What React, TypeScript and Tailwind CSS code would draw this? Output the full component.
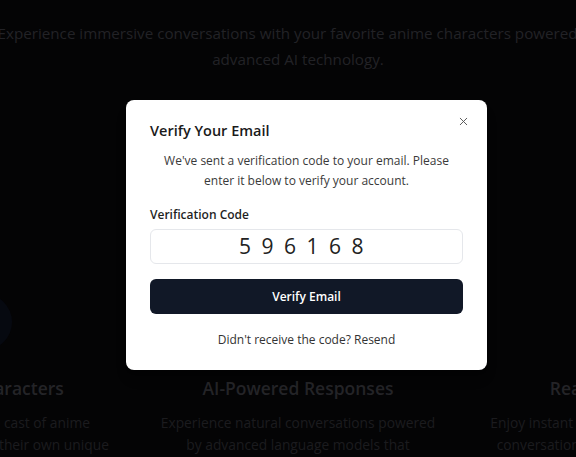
import { X } from "lucide-react";

const features = [
  {
    title: "Diverse Characters",
    text: "Chat with a diverse cast of anime characters, each with their own unique personality.",
  },
  {
    title: "AI-Powered Responses",
    text: "Experience natural conversations powered by advanced language models that understand context.",
  },
  {
    title: "Real-time Chat",
    text: "Enjoy instant responses and seamless conversation flow with your favorite characters.",
  },
];

export default function App() {
  return (
    <div
      className="relative h-[457px] w-[576px] overflow-hidden bg-[#070709]"
      style={{ fontFamily: '"Open Sans", "Noto Sans", sans-serif' }}
    >
      {/* page behind the dialog */}
      <div className="-ml-[156px] w-[908px] pt-[20px]">
        <p className="mx-auto w-[700px] text-center text-[15.2px] leading-[26px] text-[#3a3a40]">
          Experience immersive conversations with your favorite anime characters powered by
          <br />
          advanced AI technology.
        </p>
        <div className="mt-[222px] grid grid-cols-3 gap-[34px]">
          {features.map((f) => (
            <div key={f.title} className="flex flex-col items-center text-center">
              <div className="h-14 w-14 rounded-full bg-[#0b0f1c]" />
              <h3 className="mt-[24px] text-[17.5px] font-semibold leading-7 text-[#3c3c42]">
                {f.title}
              </h3>
              <p className="mt-[10px] w-[280px] text-[13.8px] leading-[22px] text-[#2e2e33]">
                {f.text}
              </p>
            </div>
          ))}
        </div>
      </div>

      {/* overlay + dialog */}
      <div className="absolute inset-0 bg-black/40" />
      <div className="absolute left-[126px] top-[100px] w-[361px] rounded-lg bg-white px-6 pb-5 pt-[21px] shadow-lg">
        <button className="absolute right-[17px] top-[15px] text-[#555]">
          <X size={13} strokeWidth={1.75} />
        </button>
        <h2 className="text-[14.5px] font-semibold leading-5 text-[#1a1a1a]">Verify Your Email</h2>
        <p className="mt-[10px] text-center text-[12px] leading-5 text-[#3a3a3a]">
          We've sent a verification code to your email. Please enter it below to verify your
          account.
        </p>
        <label className="mt-[14px] block text-[12px] font-semibold leading-5 text-[#1f1f1f]">
          Verification Code
        </label>
        <div className="mt-[4px] flex h-[35px] items-center justify-center rounded-md border border-[#e5e7eb] text-[21px] tracking-[0.5em] text-[#222]">
          596168
        </div>
        <button className="mt-[15px] h-[35px] w-full rounded-md bg-[#111827] text-[12px] font-semibold text-white">
          Verify Email
        </button>
        <p className="mt-[16px] text-center text-[12px] leading-5 text-[#333]">
          Didn't receive the code? Resend
        </p>
      </div>
    </div>
  );
}
